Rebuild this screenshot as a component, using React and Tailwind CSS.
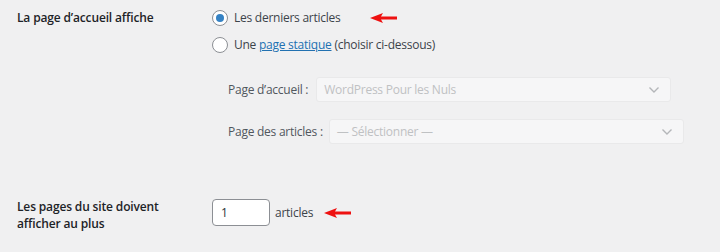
import React from "react";

function RedArrow() {
  return (
    <svg width="27" height="10" viewBox="0 0 27 10" className="block">
      <polygon points="0,5 13,0 11,3.6 27,3.6 27,6.4 11,6.4 13,10" fill="#ee1111" />
    </svg>
  );
}

function Radio({ checked }) {
  return (
    <span className="w-[16px] h-[16px] rounded-full border border-[#8c8f94] bg-white flex items-center justify-center shrink-0">
      {checked && <span className="w-[8px] h-[8px] rounded-full bg-[#3582c4]" />}
    </span>
  );
}

function DisabledSelect({ value }) {
  return (
    <div className="w-[355px] h-[25px] rounded-[3px] border border-[#e9e9ea] bg-[#f6f6f7] flex items-center justify-between pl-[7px] pr-[10px] text-[#bfc1c3]">
      <span>{value}</span>
      <svg width="12" height="8" viewBox="0 0 12 8">
        <path d="M1.5 1.5 L6 6 L10.5 1.5" stroke="#b4b6b9" strokeWidth="1.4" fill="none" />
      </svg>
    </div>
  );
}

export default function App() {
  return (
    <div className="w-[720px] h-[252px] bg-[#f0f0f1] font-['Open_Sans',sans-serif] text-[12px] tracking-[-0.25px] text-[#3c434a] overflow-hidden">
      {/* Page d'accueil */}
      <div className="flex pl-[17px] pt-[7px]">
        <div className="w-[195px] font-semibold text-[#1d2327] leading-[22px] tracking-[-0.15px]">La page d’accueil affiche</div>
        <div className="flex flex-col">
          <div className="flex items-center h-[22px] gap-[6px]">
            <Radio checked />
            <span>Les derniers articles</span>
            <span className="ml-[23px]">
              <RedArrow />
            </span>
          </div>
          <div className="flex items-center h-[22px] gap-[6px] mt-[5px]">
            <Radio />
            <span>
              Une <a className="text-[#2271b1] underline">page statique</a> (choisir ci-dessous)
            </span>
          </div>
          <div className="flex flex-col pl-[16px] mt-[21px] gap-[17px]">
            <div className="flex items-center gap-[8px]">
              <span className="text-[#50575e]">Page d’accueil :</span>
              <DisabledSelect value="WordPress Pour les Nuls" />
            </div>
            <div className="flex items-center gap-[6px]">
              <span className="text-[#50575e]">Page des articles :</span>
              <DisabledSelect value="— Sélectionner —" />
            </div>
          </div>
        </div>
      </div>

      {/* Articles par page */}
      <div className="flex pl-[17px] mt-[55px]">
        <div className="w-[195px] font-semibold text-[#1d2327] leading-[17px] -mt-[1px] tracking-[-0.15px]">
          Les pages du site doivent
          <br />
          afficher au plus
        </div>
        <div className="flex items-center h-[27px]">
          <div className="w-[58px] h-[27px] rounded-[4px] border border-[#8c8f94] bg-white flex items-center pl-[8px] text-[#2c3338]">
            1
          </div>
          <span className="ml-[5px]">articles</span>
          <span className="ml-[11px]">
            <RedArrow />
          </span>
        </div>
      </div>
    </div>
  );
}
